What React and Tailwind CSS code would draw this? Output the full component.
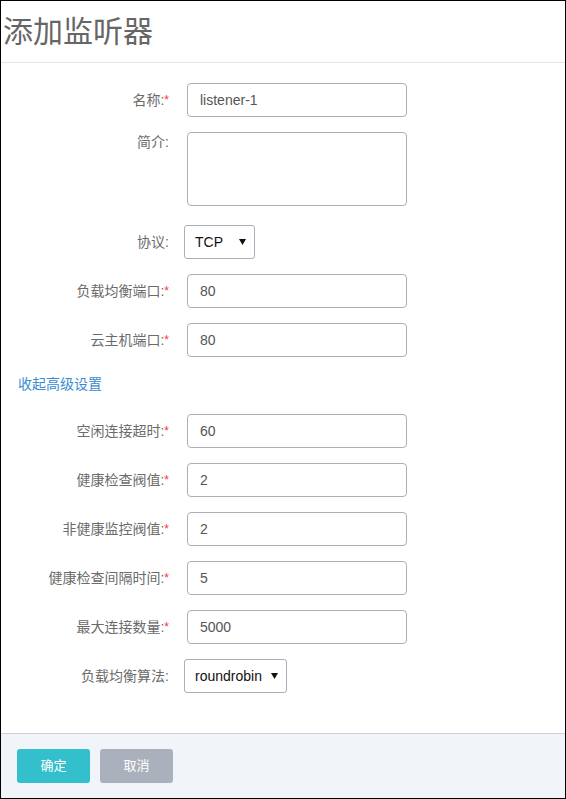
const FONT = { fontFamily: '"Liberation Sans", "Noto Sans CJK SC", sans-serif' };

const basicFields = [
  { label: '名称', value: 'listener-1', required: true },
  { label: '简介', type: 'textarea' },
  { label: '协议', type: 'select', value: 'TCP', width: 'w-[71px]' },
  { label: '负载均衡端口', value: '80', required: true },
  { label: '云主机端口', value: '80', required: true },
];

const advancedFields = [
  { label: '空闲连接超时', value: '60', required: true },
  { label: '健康检查阀值', value: '2', required: true },
  { label: '非健康监控阀值', value: '2', required: true },
  { label: '健康检查间隔时间', value: '5', required: true },
  { label: '最大连接数量', value: '5000', required: true },
  { label: '负载均衡算法', type: 'select', value: 'roundrobin', width: 'w-[103px]' },
];

function Arrow() {
  return (
    <svg width="7" height="6" viewBox="0 0 7 6" className="flex-shrink-0">
      <polygon points="0,0 7,0 3.5,6" fill="#111" />
    </svg>
  );
}

function FieldRow({ field }) {
  const isArea = field.type === 'textarea';
  const isSelect = field.type === 'select';

  return (
    <div className={`flex ${isArea ? 'items-start mb-[4px]' : 'items-center'}`}>
      <div className="w-[168px] text-right text-[14px] leading-[20px] text-[#6b6b6b] whitespace-nowrap">
        {field.label}:
        {field.required && <span className="text-[#f33] text-[12px] align-top">*</span>}
      </div>
      {isSelect ? (
        <div className={`ml-[15px] h-[34px] ${field.width} flex items-center justify-between pl-[10px] pr-[8px] border border-[#a9b0bb] rounded-[3px] bg-white text-[14px] text-[#111]`}>
          <span>{field.value}</span>
          <Arrow />
        </div>
      ) : isArea ? (
        <div className="ml-[18px] w-[220px] h-[74px] border border-[#a9b0bb] rounded-[4px] bg-white" />
      ) : (
        <div className="ml-[18px] w-[220px] h-[34px] flex items-center px-[12px] border border-[#a9b0bb] rounded-[4px] bg-white text-[14px] text-[#555]">
          {field.value}
        </div>
      )}
    </div>
  );
}

export default function App() {
  return (
    <div className="w-[566px] h-[799px] border border-black bg-white flex flex-col" style={FONT}>
      <div className="h-[62px] flex items-center px-[2px] border-b border-[#e5e5e5]">
        <h1 className="text-[30px] leading-[36px] text-[#666]">添加监听器</h1>
      </div>

      <div className="flex-1 pt-[20px]">
        <div className="flex flex-col gap-[15px]">
          {basicFields.map((f, i) => <FieldRow key={i} field={f} />)}
        </div>

        <div className="mt-[17px] mb-[20px] pl-[17px] text-[14px] leading-[20px] text-[#3a8cd0]">
          收起高级设置
        </div>

        <div className="flex flex-col gap-[15px]">
          {advancedFields.map((f, i) => <FieldRow key={i} field={f} />)}
        </div>
      </div>

      <div className="h-[65px] border-t border-[#cfd2d6] bg-[#f1f4f8] flex items-start gap-[10px] pt-[15px] pl-[16px]">
        <button className="w-[73px] h-[34px] rounded-[3px] bg-[#33bfcc] text-white text-[13px]">确定</button>
        <button className="w-[73px] h-[34px] rounded-[3px] bg-[#abb1bc] text-white text-[13px]">取消</button>
      </div>
    </div>
  );
}
